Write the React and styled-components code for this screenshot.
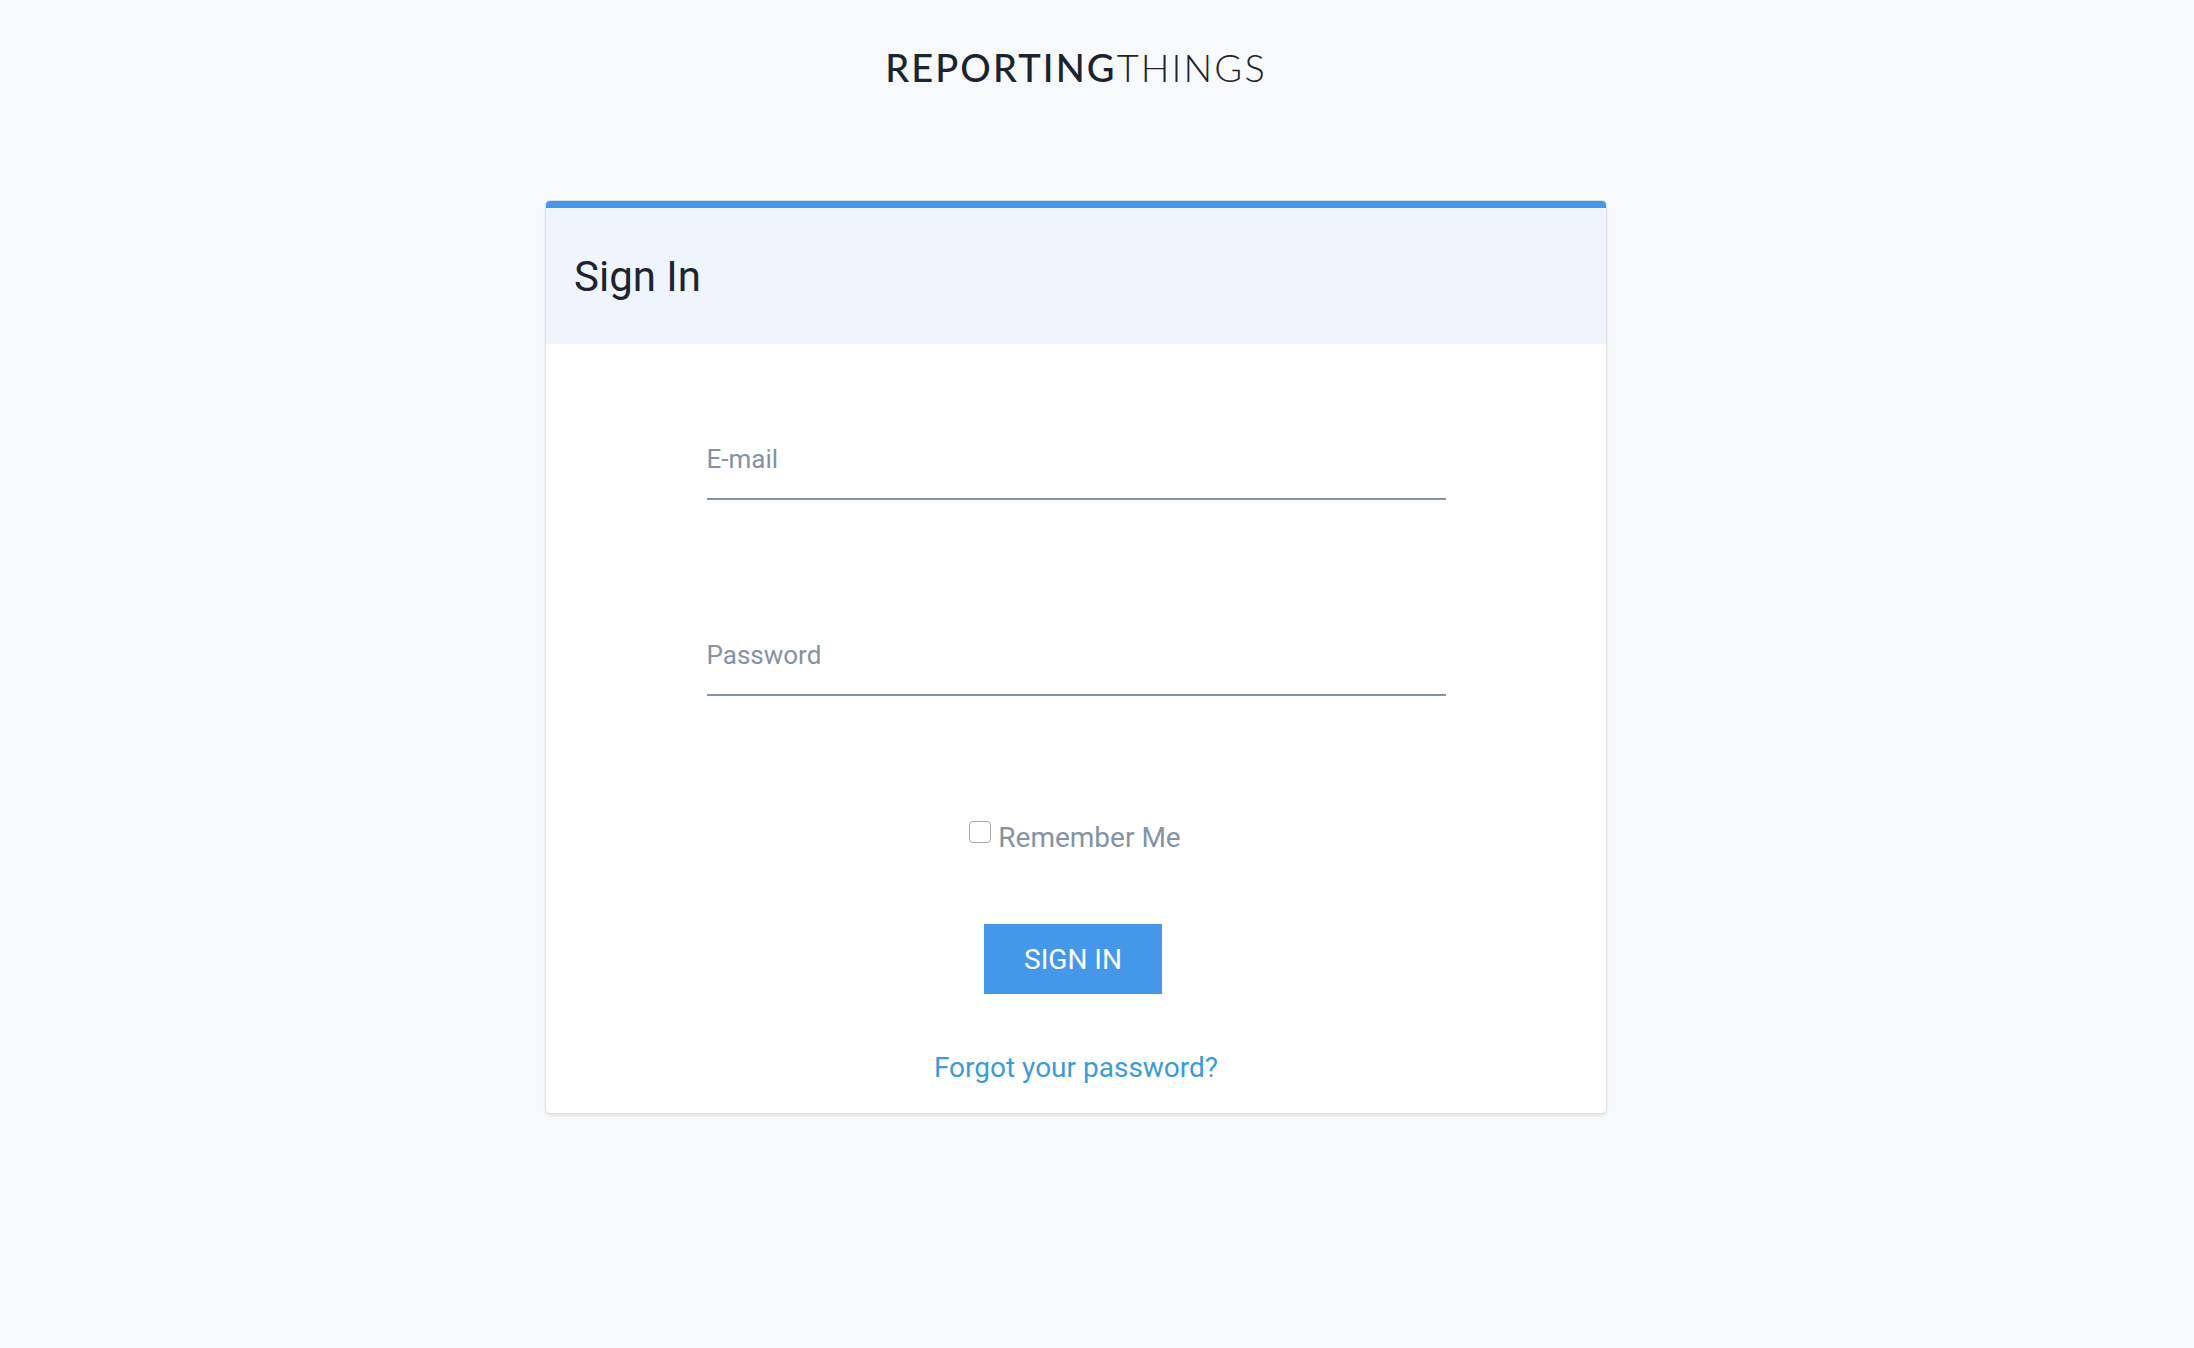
import styled, { createGlobalStyle } from 'styled-components'

const GlobalStyle = createGlobalStyle`
  html, body {
    margin: 0;
    padding: 0;
    background: #f8f9fb;
    font-family: Roboto, "Liberation Sans", sans-serif;
  }
  * {
    box-sizing: border-box;
  }
`

const Page = styled.div`
  min-height: 100vh;
  display: flex;
  flex-direction: column;
  align-items: center;
  padding: 48px 42px 0 0;
`

const Logo = styled.div`
  font-family: Lato, "Open Sans", sans-serif;
  font-size: 38px;
  line-height: 38px;
  letter-spacing: 2.1px;
  color: #1b2230;
  white-space: nowrap;
`

const LogoStrong = styled.span`
  font-weight: 500;
`

const LogoLight = styled.span`
  font-weight: 300;
`

const Card = styled.div`
  width: 1062px;
  margin-top: 114px;
  background: #fff;
  border: 1px solid #dcdfe3;
  border-radius: 5px;
  overflow: hidden;
  box-shadow: 0 2px 3px rgba(0, 0, 0, 0.08);
`

const CardHeader = styled.div`
  height: 143px;
  border-top: 7px solid #4597ea;
  background: #eef5fc;
  display: flex;
  align-items: center;
  padding-left: 28px;
`

const Title = styled.h1`
  margin: 0;
  font-size: 42px;
  font-weight: 400;
  color: #1c2431;
`

const CardBody = styled.form`
  display: flex;
  flex-direction: column;
  align-items: center;
  padding: 100px 0 29px;
`

const Input = styled.input`
  display: block;
  width: 739px;
  height: 56px;
  margin-top: ${props => props.$gap || 0}px;
  padding: 0 0 24px;
  border: none;
  border-bottom: 2px solid #8492a6;
  border-radius: 0;
  outline: none;
  background: transparent;
  font-family: Roboto, "Liberation Sans", sans-serif;
  font-size: 26px;
  line-height: 30px;
  color: #3c4858;

  &::placeholder {
    color: #8492a6;
  }
`

const RememberRow = styled.label`
  display: flex;
  align-items: flex-start;
  gap: 7px;
  margin-top: 126px;
  margin-right: 2px;
  font-size: 28px;
  line-height: 32px;
  color: #8492a6;
  cursor: pointer;
`

const Checkbox = styled.input`
  appearance: none;
  width: 22px;
  height: 22px;
  margin: -1px 0 0;
  border: 1.5px solid #a8a8a8;
  border-radius: 4px;
  background: #fff;
`

const SubmitButton = styled.button`
  width: 178px;
  height: 70px;
  margin-top: 70px;
  margin-right: 6px;
  border: none;
  border-radius: 0;
  background: #4597ea;
  color: #fff;
  font-family: Roboto, "Liberation Sans", sans-serif;
  font-size: 28px;
  text-transform: uppercase;
  cursor: pointer;
`

const ForgotLink = styled.a`
  margin-top: 58px;
  font-size: 28px;
  line-height: 32px;
  color: #3c9ad9;
  text-decoration: none;
`

export default function App() {
  return (
    <>
      <GlobalStyle />
      <Page>
        <Logo>
          <LogoStrong>REPORTING</LogoStrong>
          <LogoLight>THINGS</LogoLight>
        </Logo>
        <Card>
          <CardHeader>
            <Title>Sign In</Title>
          </CardHeader>
          <CardBody onSubmit={e => e.preventDefault()}>
            <Input type="email" placeholder="E-mail" />
            <Input type="password" placeholder="Password" $gap={140} />
            <RememberRow>
              <Checkbox type="checkbox" />
              Remember Me
            </RememberRow>
            <SubmitButton type="submit">Sign In</SubmitButton>
            <ForgotLink href="#">Forgot your password?</ForgotLink>
          </CardBody>
        </Card>
      </Page>
    </>
  )
}
